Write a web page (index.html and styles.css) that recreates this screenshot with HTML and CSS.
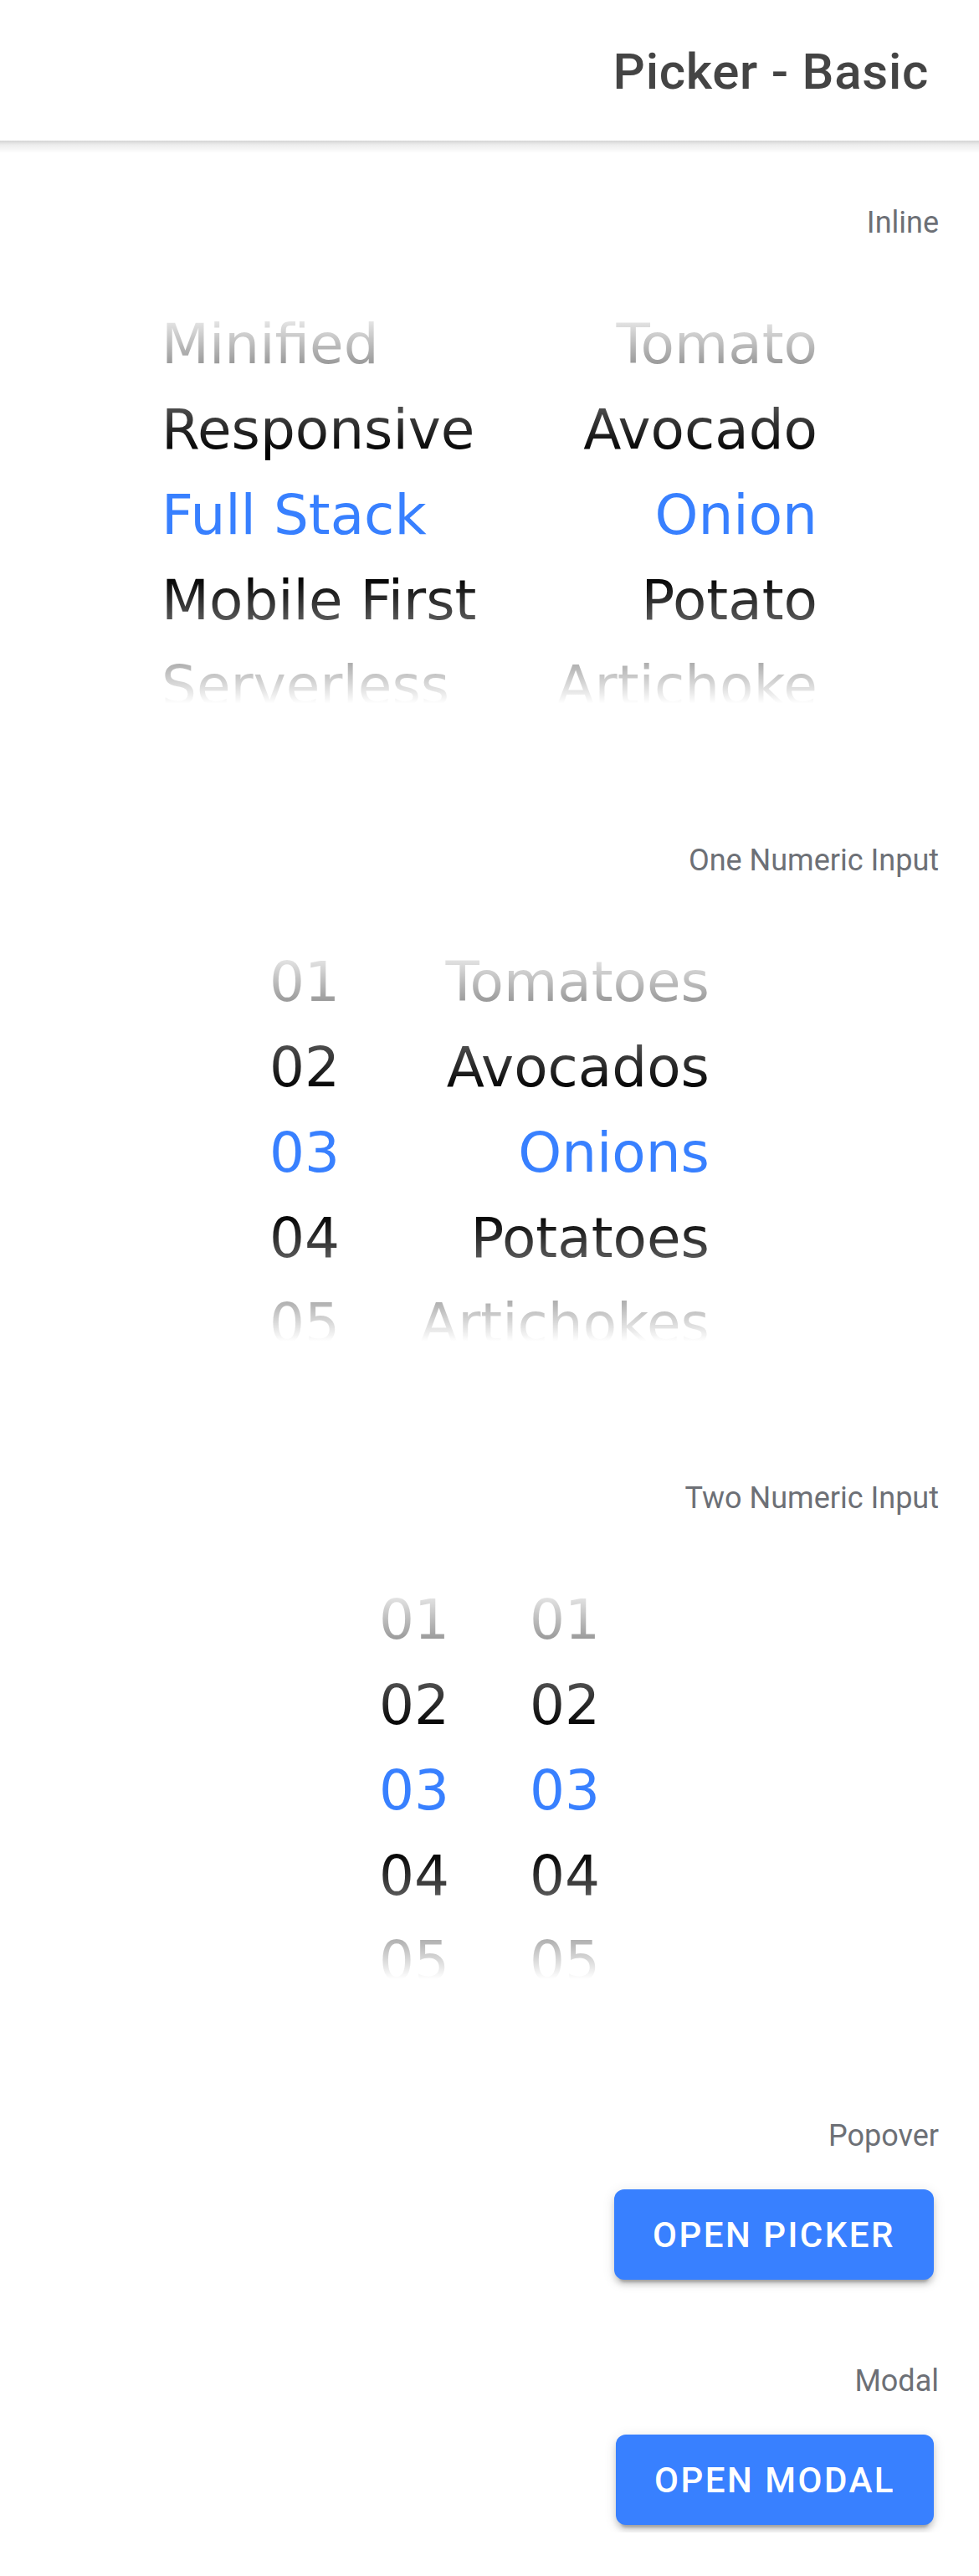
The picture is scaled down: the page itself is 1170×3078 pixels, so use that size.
FILE: index.html
```html
<!DOCTYPE html>
<html lang="en">
<head>
<meta charset="utf-8">
<title>Picker - Basic</title>
<link rel="stylesheet" href="styles.css">
</head>
<body>
<header class="toolbar">
  <h1 class="title">Picker - Basic</h1>
</header>
<main class="content">
  <section class="demo">
    <div class="demo-label">Inline</div>
    <div class="picker">
      <div class="picker-col col-start">
        <div class="item">Minified</div>
        <div class="item">Responsive</div>
        <div class="item selected">Full Stack</div>
        <div class="item">Mobile First</div>
        <div class="item">Serverless</div>
      </div>
      <div class="picker-col col-end">
        <div class="item">Tomato</div>
        <div class="item">Avocado</div>
        <div class="item selected">Onion</div>
        <div class="item">Potato</div>
        <div class="item">Artichoke</div>
      </div>
      <div class="fade fade-top"></div>
      <div class="fade fade-bottom"></div>
    </div>
  </section>

  <section class="demo">
    <div class="demo-label">One Numeric Input</div>
    <div class="picker">
      <div class="picker-col col-start">
        <div class="item">01</div>
        <div class="item">02</div>
        <div class="item selected">03</div>
        <div class="item">04</div>
        <div class="item">05</div>
      </div>
      <div class="picker-col col-end">
        <div class="item">Tomatoes</div>
        <div class="item">Avocados</div>
        <div class="item selected">Onions</div>
        <div class="item">Potatoes</div>
        <div class="item">Artichokes</div>
      </div>
      <div class="fade fade-top"></div>
      <div class="fade fade-bottom"></div>
    </div>
  </section>

  <section class="demo">
    <div class="demo-label">Two Numeric Input</div>
    <div class="picker">
      <div class="picker-col col-start">
        <div class="item">01</div>
        <div class="item">02</div>
        <div class="item selected">03</div>
        <div class="item">04</div>
        <div class="item">05</div>
      </div>
      <div class="picker-col col-end">
        <div class="item">01</div>
        <div class="item">02</div>
        <div class="item selected">03</div>
        <div class="item">04</div>
        <div class="item">05</div>
      </div>
      <div class="fade fade-top"></div>
      <div class="fade fade-bottom"></div>
    </div>
  </section>

  <section class="demo">
    <div class="demo-label">Popover</div>
    <div class="btn-row">
      <button class="btn" type="button">Open Picker</button>
    </div>
  </section>

  <section class="demo">
    <div class="demo-label">Modal</div>
    <div class="btn-row">
      <button class="btn" type="button">Open Modal</button>
    </div>
  </section>
</main>
</body>
</html>
```

FILE: styles.css
```css
* {
  box-sizing: border-box;
}

html, body {
  margin: 0;
  padding: 0;
  background: #ffffff;
}

body {
  font-family: Roboto, "Liberation Sans", Arial, sans-serif;
  color: #000000;
  font-kerning: normal;
  text-rendering: optimizeLegibility;
}

.toolbar {
  position: relative;
  height: 168px;
  background: #ffffff;
  display: flex;
  align-items: center;
  justify-content: flex-end;
  padding: 0 60px;
}

.toolbar::after {
  content: "";
  position: absolute;
  left: 0;
  right: 0;
  top: 100%;
  height: 15px;
  background: linear-gradient(to bottom,
    rgba(0, 0, 0, 0.17) 0%,
    rgba(0, 0, 0, 0.07) 35%,
    rgba(0, 0, 0, 0.03) 75%,
    rgba(0, 0, 0, 0) 100%);
}

.title {
  margin: 0;
  padding-top: 3px;
  font-size: 60px;
  font-weight: 500;
  line-height: 168px;
  color: #444444;
  letter-spacing: 0.75px;
}

.content {
  display: flex;
  flex-direction: column;
  gap: 88px;
  padding-top: 74px;
}

.demo {
  display: flex;
  flex-direction: column;
}

.demo-label {
  font-size: 36px;
  line-height: 48px;
  color: #6d7076;
  text-align: right;
  padding-right: 48px;
  margin-bottom: 26px;
}

.picker {
  position: relative;
  height: 600px;
  display: flex;
  justify-content: center;
  font-family: "DejaVu Sans", Verdana, sans-serif;
  font-size: 66px;
  font-kerning: normal;
  font-feature-settings: "kern" 1, "liga" 1;
}

.demo-label + .btn-row {
  margin-top: -26px;
}

.picker-col {
  display: flex;
  flex-direction: column;
  justify-content: center;
  padding: 0 48px;
}

.col-start {
  text-align: left;
}

.col-end {
  text-align: right;
}

.item {
  height: 102px;
  line-height: 102px;
  white-space: nowrap;
  color: #000000;
}

.item.selected {
  color: #3880ff;
}

.fade {
  position: absolute;
  left: 0;
  right: 0;
  pointer-events: none;
}

.fade-top {
  top: 0;
  height: 249px;
  background: linear-gradient(to bottom,
    rgba(255, 255, 255, 1) 20%,
    rgba(255, 255, 255, 0) 90%);
}

.fade-bottom {
  top: 348px;
  height: 252px;
  background: linear-gradient(to top,
    rgba(255, 255, 255, 1) 30%,
    rgba(255, 255, 255, 0) 90%);
}

.btn-row {
  display: flex;
  justify-content: flex-end;
  padding: 40px 54px 9px 0;
}

.btn {
  height: 108px;
  padding: 0 46px;
  border: none;
  border-radius: 12px;
  background: #3880ff;
  color: #ffffff;
  font-family: Roboto, "Liberation Sans", Arial, sans-serif;
  font-size: 42px;
  font-weight: 500;
  letter-spacing: 2.5px;
  text-transform: uppercase;
  box-shadow:
    0 9px 3px -6px rgba(0, 0, 0, 0.2),
    0 6px 6px 0 rgba(0, 0, 0, 0.14),
    0 3px 15px 0 rgba(0, 0, 0, 0.12);
  cursor: pointer;
}
```
